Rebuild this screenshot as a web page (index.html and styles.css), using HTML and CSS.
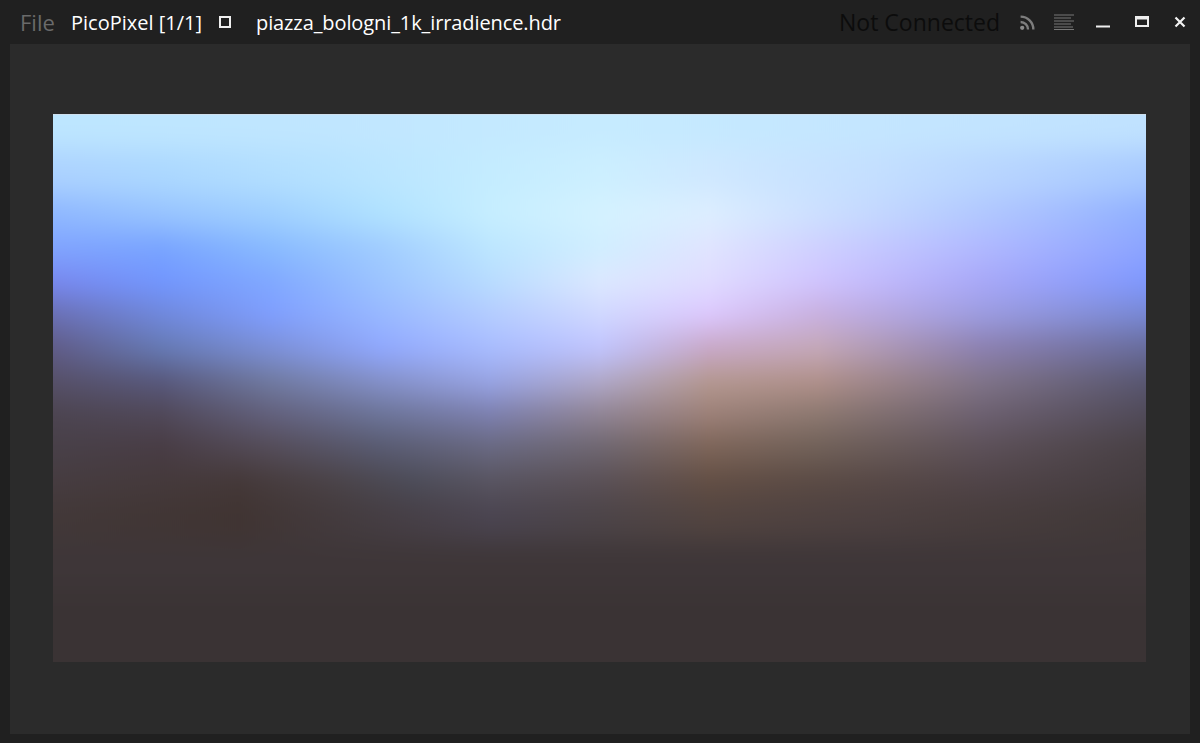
FILE: index.html
```html
<!DOCTYPE html>
<html lang="en">
<head>
<meta charset="utf-8">
<title>PicoPixel</title>
<link rel="stylesheet" href="styles.css">
</head>
<body>
<div class="window">
  <header class="titlebar">
    <span class="menu">File</span>
    <span class="app">PicoPixel [1/1]</span>
    <span class="stop"></span>
    <span class="file">piazza_bologni_1k_irradience.hdr</span>
    <span class="status">Not Connected</span>
    <svg class="ic rss" viewBox="0 0 16 16"><circle cx="3" cy="13" r="2" fill="#8a8a8a"/><path d="M1.500 7.500a7 7 0 0 1 7 7M1.500 2.500a12 12 0 0 1 12 12" fill="none" stroke="#7e7e7e" stroke-width="2.200"/></svg>
    <svg class="ic list" viewBox="0 0 20 16"><path d="M0 1h20M0 4h17M0 7h20M0 10h17M0 13h19M0 15.500h20" stroke="#777" stroke-width="1"/></svg>
    <svg class="ic min" viewBox="0 0 14 14"><path d="M0 11.500h14" stroke="#eee" stroke-width="2"/></svg>
    <svg class="ic max" viewBox="0 0 14 14"><path d="M1 2h12v9H1z" fill="none" stroke="#eee" stroke-width="2"/><path d="M1 3h12" stroke="#eee" stroke-width="3"/></svg>
    <svg class="ic close" viewBox="0 0 12 12"><path d="M1.500 1.500l9 9M10.500 1.500l-9 9" stroke="#f2f2f2" stroke-width="2.200"/></svg>
  </header>
  <main class="panel">
    <svg class="image" viewBox="0 0 1093 547" preserveAspectRatio="none">
      <defs>
        <linearGradient id="a"><stop offset="0" stop-color="#bde6ff"/><stop offset=".25" stop-color="#c0e6ff"/><stop offset=".5" stop-color="#c6ebff"/><stop offset=".75" stop-color="#c4e6ff"/><stop offset="1" stop-color="#c0e2ff"/></linearGradient>
        <linearGradient id="b"><stop offset="0" stop-color="#acd2ff"/><stop offset=".1" stop-color="#acd8ff"/><stop offset=".25" stop-color="#b6e2ff"/><stop offset=".4" stop-color="#c4ecff"/><stop offset=".5" stop-color="#ccefff"/><stop offset=".6" stop-color="#cfe8ff"/><stop offset=".75" stop-color="#c4dfff"/><stop offset=".9" stop-color="#b4d2ff"/><stop offset="1" stop-color="#a8caff"/></linearGradient>
        <linearGradient id="c"><stop offset="0" stop-color="#8fb8ff"/><stop offset=".1" stop-color="#98c4ff"/><stop offset=".2" stop-color="#a0d0ff"/><stop offset=".3" stop-color="#b0e2ff"/><stop offset=".4" stop-color="#c6eeff"/><stop offset=".5" stop-color="#d4f2ff"/><stop offset=".6" stop-color="#dceeff"/><stop offset=".75" stop-color="#c4d8ff"/><stop offset=".9" stop-color="#a8c0ff"/><stop offset="1" stop-color="#90b0ff"/></linearGradient>
        <linearGradient id="d"><stop offset="0" stop-color="#80a4ff"/><stop offset=".1" stop-color="#78a4ff"/><stop offset=".2" stop-color="#88baff"/><stop offset=".3" stop-color="#a0ccff"/><stop offset=".4" stop-color="#bce6ff"/><stop offset=".5" stop-color="#d0eeff"/><stop offset=".6" stop-color="#e0e4ff"/><stop offset=".7" stop-color="#cfd0ff"/><stop offset=".85" stop-color="#b0b8ff"/><stop offset="1" stop-color="#8ca4ff"/></linearGradient>
        <linearGradient id="e"><stop offset="0" stop-color="#7888f0"/><stop offset=".1" stop-color="#7296ff"/><stop offset=".2" stop-color="#80a8ff"/><stop offset=".3" stop-color="#9cc4ff"/><stop offset=".4" stop-color="#b8dcff"/><stop offset=".5" stop-color="#dce8ff"/><stop offset=".6" stop-color="#e0dcff"/><stop offset=".7" stop-color="#d0c4ff"/><stop offset=".85" stop-color="#a8a8f8"/><stop offset="1" stop-color="#7f98ff"/></linearGradient>
        <linearGradient id="f"><stop offset="0" stop-color="#6a70b4"/><stop offset=".1" stop-color="#7088dc"/><stop offset=".2" stop-color="#7f9eff"/><stop offset=".3" stop-color="#98b8ff"/><stop offset=".4" stop-color="#b4ccff"/><stop offset=".5" stop-color="#d0d8ff"/><stop offset=".6" stop-color="#dcc8ff"/><stop offset=".7" stop-color="#c8b0e0"/><stop offset=".85" stop-color="#9c9ce0"/><stop offset="1" stop-color="#7888d4"/></linearGradient>
        <linearGradient id="g"><stop offset="0" stop-color="#605c88"/><stop offset=".1" stop-color="#667ab4"/><stop offset=".2" stop-color="#7c90d8"/><stop offset=".3" stop-color="#90a8ff"/><stop offset=".4" stop-color="#a8bcff"/><stop offset=".5" stop-color="#c0c4ff"/><stop offset=".6" stop-color="#c8a8c8"/><stop offset=".7" stop-color="#c4a8b8"/><stop offset=".85" stop-color="#8c80b0"/><stop offset="1" stop-color="#686c9c"/></linearGradient>
        <linearGradient id="h"><stop offset="0" stop-color="#565068"/><stop offset=".1" stop-color="#58587c"/><stop offset=".2" stop-color="#707aa0"/><stop offset=".3" stop-color="#8490c8"/><stop offset=".4" stop-color="#98a4e4"/><stop offset=".5" stop-color="#b0a8c8"/><stop offset=".6" stop-color="#b49890"/><stop offset=".7" stop-color="#b0908a"/><stop offset=".85" stop-color="#807488"/><stop offset="1" stop-color="#585670"/></linearGradient>
        <linearGradient id="i"><stop offset="0" stop-color="#4c4450"/><stop offset=".1" stop-color="#504858"/><stop offset=".2" stop-color="#62607c"/><stop offset=".3" stop-color="#6c7498"/><stop offset=".4" stop-color="#7c7fae"/><stop offset=".5" stop-color="#908494"/><stop offset=".6" stop-color="#9c8078"/><stop offset=".7" stop-color="#8c7870"/><stop offset=".85" stop-color="#6c6070"/><stop offset="1" stop-color="#504a58"/></linearGradient>
        <linearGradient id="j"><stop offset="0" stop-color="#484048"/><stop offset=".1" stop-color="#483c44"/><stop offset=".2" stop-color="#544c58"/><stop offset=".3" stop-color="#585a70"/><stop offset=".4" stop-color="#686880"/><stop offset=".5" stop-color="#6e6670"/><stop offset=".6" stop-color="#7c6458"/><stop offset=".7" stop-color="#706058"/><stop offset=".85" stop-color="#5c5058"/><stop offset="1" stop-color="#484044"/></linearGradient>
        <linearGradient id="k"><stop offset="0" stop-color="#463c40"/><stop offset=".17" stop-color="#443838"/><stop offset=".25" stop-color="#4a4246"/><stop offset=".33" stop-color="#4c4c58"/><stop offset=".4" stop-color="#585460"/><stop offset=".5" stop-color="#5a5056"/><stop offset=".6" stop-color="#624e44"/><stop offset=".7" stop-color="#5a4a44"/><stop offset=".85" stop-color="#504448"/><stop offset="1" stop-color="#443c40"/></linearGradient>
        <linearGradient id="l"><stop offset="0" stop-color="#423838"/><stop offset=".17" stop-color="#403432"/><stop offset=".28" stop-color="#443c40"/><stop offset=".4" stop-color="#4a4450"/><stop offset=".5" stop-color="#4c4448"/><stop offset=".6" stop-color="#524440"/><stop offset=".75" stop-color="#4c4040"/><stop offset="1" stop-color="#403838"/></linearGradient>
        <filter id="soft" filterUnits="userSpaceOnUse" x="0" y="-200" width="1093" height="1000" color-interpolation-filters="sRGB"><feGaussianBlur stdDeviation="0 14"/></filter>
      </defs>
      <g filter="url(#soft)">
        <rect x="0" y="-200" width="1093" height="235" fill="url(#a)"/>
        <rect x="0" y="35" width="1093" height="45" fill="url(#b)"/>
        <rect x="0" y="80" width="1093" height="36" fill="url(#c)"/>
        <rect x="0" y="116" width="1093" height="34" fill="url(#d)"/>
        <rect x="0" y="150" width="1093" height="33" fill="url(#e)"/>
        <rect x="0" y="183" width="1093" height="33" fill="url(#f)"/>
        <rect x="0" y="216" width="1093" height="34" fill="url(#g)"/>
        <rect x="0" y="250" width="1093" height="33" fill="url(#h)"/>
        <rect x="0" y="283" width="1093" height="33" fill="url(#i)"/>
        <rect x="0" y="316" width="1093" height="34" fill="url(#j)"/>
        <rect x="0" y="350" width="1093" height="33" fill="url(#k)"/>
        <rect x="0" y="383" width="1093" height="42" fill="url(#l)"/>
        <rect class="dusk" x="0" y="425" width="1093" height="50"/>
        <rect class="ground" x="0" y="475" width="1093" height="325"/>
      </g>
    </svg>
  </main>
</div>
</body>
</html>
```

FILE: styles.css
```css
* { box-sizing: border-box; }
html, body { margin: 0; height: 100%; }
body { background: #202020; overflow: hidden; font-family: "Open Sans", "Noto Sans", sans-serif; }
.window { display: flex; flex-direction: column; height: 743px; padding: 0 10px 10px; }
.titlebar { display: flex; align-items: center; height: 44px; flex: none; padding: 0 0 0 10px; color: #fff; font-size: 20px; white-space: nowrap; }
.menu { color: #6a6a6a; font-size: 22px; width: 51px; }
.app { width: 148px; }
.stop { width: 12px; height: 12px; border: 2px solid #f0f0f0; margin-right: 25px; }
.file { letter-spacing: -.1px; }
.status { margin-left: auto; color: #0c0c0c; font-size: 23px; margin-right: 19px; }
.ic { flex: none; display: block; }
.rss { width: 17px; height: 17px; margin-right: 18px; }
.list { width: 20px; height: 16px; margin-right: 22px; }
.min { width: 14px; height: 14px; margin-right: 25px; }
.max { width: 14px; height: 14px; margin-right: 25px; }
.close { width: 12px; height: 12px; margin-right: 4px; }
.panel { flex: 1; display: flex; background: #2b2b2b; padding: 70px 44px 72px 43px; }
.image { flex: 1; display: block; width: 100%; height: 100%; min-width: 0; border-top: 1px solid #cfe0ee; }
.dusk { fill: #3e3638; }
.ground { fill: #3a3334; }
```
